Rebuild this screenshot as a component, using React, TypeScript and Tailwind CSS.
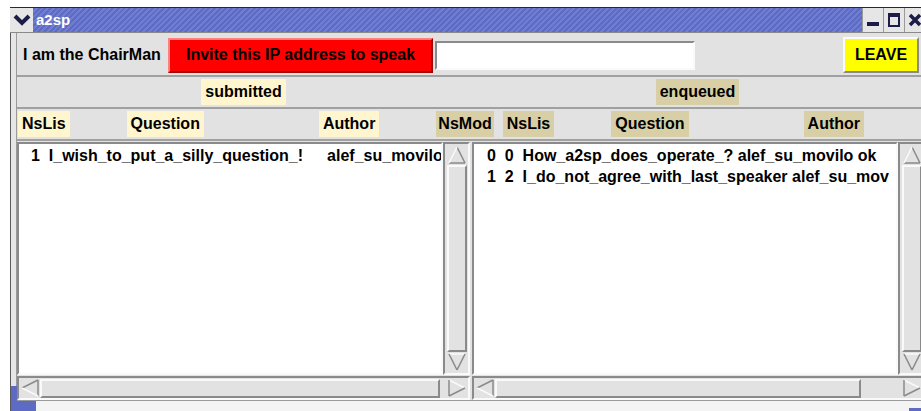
import { FC, ReactNode } from "react";

const raised =
    "border-2 border-t-[#fafafa] border-l-[#fafafa] border-b-[#8a8a8a] border-r-[#8a8a8a]";
const sunken =
    "border-2 border-t-[#8a8a8a] border-l-[#8a8a8a] border-b-[#fafafa] border-r-[#fafafa]";

type Dir = "up" | "down" | "left" | "right";

// Motif style outlined arrow used on the scrollbars
const Arrow: FC<{ dir: Dir; size?: number }> = ({ dir, size = 20 }) => {
    const s = size;
    const pts: Record<Dir, [number, number][]> = {
        up: [[s / 2, 2], [s - 2, s - 2], [2, s - 2]],
        down: [[2, 2], [s - 2, 2], [s / 2, s - 2]],
        left: [[2, s / 2], [s - 2, 2], [s - 2, s - 2]],
        right: [[2, 2], [s - 2, s / 2], [2, s - 2]],
    };
    const [a, b, c] = pts[dir];
    return (
        <svg width={s} height={s} className="block">
            <polygon points={[a, b, c].map((p) => p.join(",")).join(" ")} fill="#e2e2e2" />
            <line x1={a[0]} y1={a[1]} x2={b[0]} y2={b[1]} stroke={dir === "down" ? "#fafafa" : dir === "right" ? "#fafafa" : "#8a8a8a"} strokeWidth="1.5" />
            <line x1={b[0]} y1={b[1]} x2={c[0]} y2={c[1]} stroke="#8a8a8a" strokeWidth="1.5" />
            <line x1={c[0]} y1={c[1]} x2={a[0]} y2={a[1]} stroke={dir === "up" ? "#fafafa" : dir === "left" ? "#fafafa" : "#8a8a8a"} strokeWidth="1.5" />
        </svg>
    );
};

const VScroll: FC = () => (
    <div className={`${sunken} flex w-[27px] shrink-0 flex-col items-center bg-[#e2e2e2] py-[1px]`}>
        <Arrow dir="up" />
        <div className={`${raised} w-[20px] flex-1 bg-[#e2e2e2]`} />
        <Arrow dir="down" />
    </div>
);

const HScroll: FC<{ thumb: string; trailing?: boolean }> = ({ thumb, trailing }) => (
    <div className={`${sunken} flex h-[24px] items-center bg-[#e2e2e2] px-[1px]`}>
        <Arrow dir="left" />
        <div className={`${raised} h-[19px] ${thumb} bg-[#e2e2e2]`} />
        <div className="flex-1" />
        {trailing && <Arrow dir="right" />}
    </div>
);

const Tag: FC<{ children: ReactNode; tone: "pale" | "tan"; className?: string }> = ({ children, tone, className = "" }) => (
    <div
        className={`flex h-[26px] items-center px-[4px] ${tone === "pale" ? "bg-[#fff6cf]" : "bg-[#d8cfa6]"} ${className}`}
    >
        {children}
    </div>
);

const TitleButton: FC<{ children: ReactNode }> = ({ children }) => (
    <div className="flex h-[24px] w-[21px] items-center justify-center border-l border-[#9a9a9a] bg-[#e6e6e6]">
        {children}
    </div>
);

export default function App() {
    return (
        <div className="h-[411px] w-[921px] overflow-hidden bg-white pl-[10px] pt-[7px] font-['Liberation_Sans',Arial,sans-serif] text-[16px] font-bold text-black">
            <div className="flex w-[915px] flex-col border-t border-[#2a2a2a]">
                {/* title bar */}
                <div className="flex h-[25px] items-stretch border-b border-[#8a8a8a] bg-[repeating-linear-gradient(135deg,#5d6bc2_0px,#5d6bc2_2px,#6f7ed2_2px,#6f7ed2_4px)]">
                    <div className="flex w-[23px] items-center justify-center bg-[#e6e6e6]">
                        <svg width="18" height="12" viewBox="0 0 18 12">
                            <path d="M2 2 L9 9 L16 2" fill="none" stroke="#1c1c48" strokeWidth="4" />
                        </svg>
                    </div>
                    <div className="flex flex-1 items-center pl-[3px] text-[15px] text-white">a2sp</div>
                    <TitleButton>
                        <div className="mt-[8px] h-[4px] w-[12px] bg-[#1c1c48]" />
                    </TitleButton>
                    <TitleButton>
                        <div className="h-[14px] w-[12px] border-2 border-t-4 border-[#1c1c48]" />
                    </TitleButton>
                    <TitleButton>
                        <svg width="14" height="14" viewBox="0 0 14 14">
                            <path d="M2 2 L12 12 M12 2 L2 12" stroke="#1c1c48" strokeWidth="3.5" />
                        </svg>
                    </TitleButton>
                </div>

                <div className="flex">
                    {/* left frame */}
                    <div className="flex w-[7px] flex-col border-l border-[#5a5a5a] bg-[#e6e6e6]">
                        <div className="flex-1 border-r border-[#9a9a9a]" />
                        <div className="h-[26px] bg-[#5d6bc2]" />
                    </div>

                    <div className="flex flex-1 flex-col bg-[#e2e2e2]">
                        {/* controls */}
                        <div className="flex h-[44px] items-center border-b-2 border-[#a0a0a0] pt-[2px]">
                            <div className="w-[151px] pl-[6px]">I am the ChairMan</div>
                            <div className={`${raised} flex h-[35px] w-[265px] items-center justify-center border-b-[#a00000] border-r-[#a00000] border-t-[#ff8080] border-l-[#ff8080] bg-[#ff0000]`}>
                                Invite this IP address to speak
                            </div>
                            <div className={`${sunken} ml-[2px] h-[29px] w-[260px] bg-white`} />
                            <div className="flex-1" />
                            <div className={`${raised} mr-[6px] flex h-[36px] w-[76px] items-center justify-center border-b-[#8a8a00] border-r-[#8a8a00] bg-[#ffff00]`}>
                                LEAVE
                            </div>
                        </div>

                        {/* section titles */}
                        <div className="flex h-[32px] items-center border-b-2 border-[#a0a0a0]">
                            <div className="flex w-[453px] justify-center">
                                <Tag tone="pale">submitted</Tag>
                            </div>
                            <div className="flex flex-1 justify-center">
                                <Tag tone="tan">enqueued</Tag>
                            </div>
                        </div>

                        {/* column headers */}
                        <div className="flex h-[32px] items-center border-b-2 border-[#a0a0a0]">
                            <Tag tone="pale" className="ml-[1px]">NsLis</Tag>
                            <Tag tone="pale" className="ml-[57px]">Question</Tag>
                            <Tag tone="pale" className="ml-[115px]">Author</Tag>
                            <Tag tone="tan" className="ml-[57px] !px-[2px]">NsMod</Tag>
                            <Tag tone="tan" className="ml-[9px]">NsLis</Tag>
                            <Tag tone="tan" className="ml-[57px]">Question</Tag>
                            <Tag tone="tan" className="ml-[115px]">Author</Tag>
                        </div>

                        {/* lists */}
                        <div className="flex h-[234px] pt-[1px]">
                            <div className={`${sunken} w-[426px] overflow-hidden whitespace-pre bg-white pl-[12px] pt-[1px] leading-[21px]`}>
                                <div>
                                    1  I_wish_to_put_a_silly_question_!<span className="ml-[24px]">alef_su_movilo</span>
                                </div>
                            </div>
                            <VScroll />
                            <div className={`${sunken} ml-[2px] w-[426px] overflow-hidden whitespace-pre bg-white pl-[13px] pt-[1px] leading-[21px]`}>
                                <div>0  0  How_a2sp_does_operate_? alef_su_movilo ok</div>
                                <div>1  2  I_do_not_agree_with_last_speaker alef_su_mov</div>
                            </div>
                            <VScroll />
                        </div>

                        {/* horizontal scrollbars */}
                        <div className="flex pt-[1px]">
                            <div className="w-[453px]">
                                <HScroll thumb="w-[400px]" trailing />
                            </div>
                            <div className="ml-[2px] flex-1">
                                <HScroll thumb="w-[366px]" trailing />
                            </div>
                        </div>

                        {/* bottom frame */}
                        <div className="flex h-[12px] border-t border-[#9a9a9a] bg-[#f4f4f4]">
                            <div className="w-[19px] bg-[#5d6bc2]" />
                            <div className="flex-1" />
                            <div className="mt-[7px] w-[16px] bg-[#5d6bc2]" />
                        </div>
                    </div>
                </div>
            </div>
        </div>
    );
}
